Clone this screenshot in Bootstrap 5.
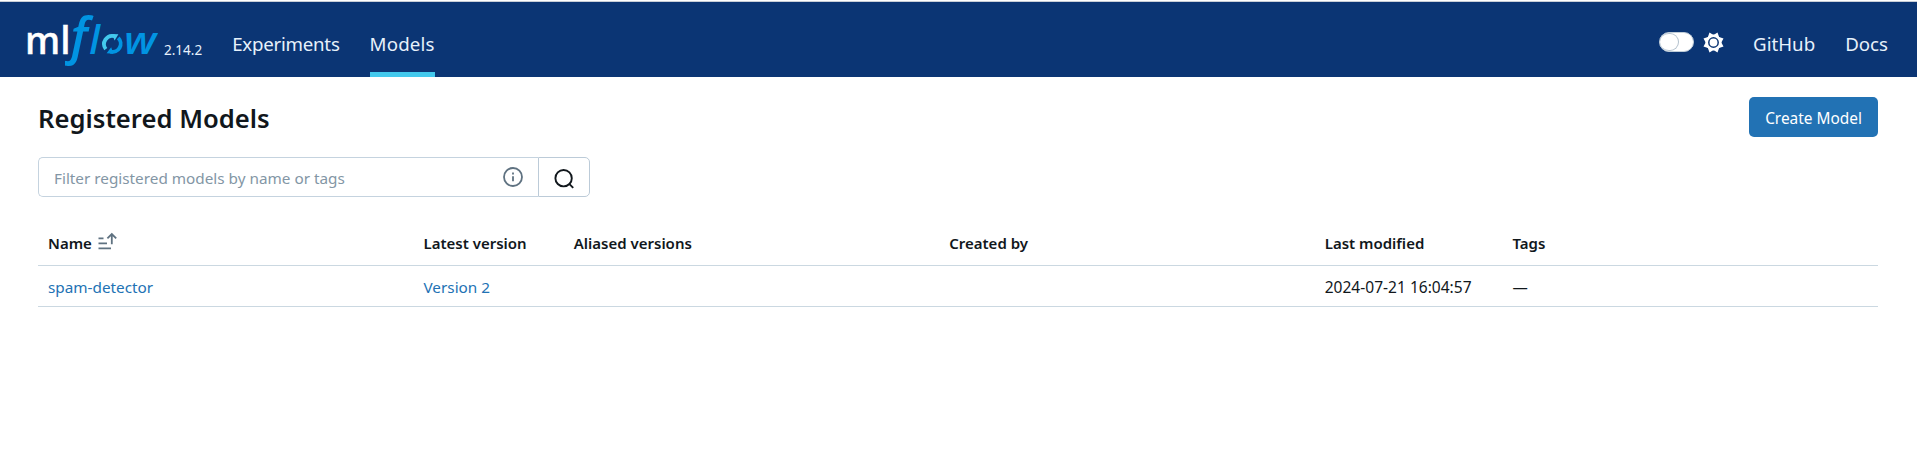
<!DOCTYPE html>
<html lang="en">
<head>
<meta charset="utf-8">
<meta name="viewport" content="width=device-width, initial-scale=1">
<title>MLflow</title>
<link href="https://cdn.jsdelivr.net/npm/bootstrap@5.3.0/dist/css/bootstrap.min.css" rel="stylesheet">
<style>
  body { font-family: "Noto Sans", "Open Sans", sans-serif; font-size: 15.3px; line-height: 20px; color: #11171c; overflow: hidden; }
  .top-edge { height: 2px; background: linear-gradient(#fff 50%, #c9ced6 50%); }
  .app-bar { height: 75px; background: #0b3574; padding: 0 28px 0 20px; font-size: 18.7px; }
  .app-bar a { color: #e7f1fb; text-decoration: none; line-height: 26px; padding-top: 29px; height: 75px; }
  .app-bar .version { font-size: 13.5px; color: #e7f1fb; padding-top: 38px; margin-left: 6px; line-height: 20px; }
  .app-bar a.is-active { border-bottom: 5px solid #43c9ed; letter-spacing: .15px; }
  .nav-exp { margin-left: 30px; margin-right: 30px; letter-spacing: -.24px; }
  .toggle-track { width: 35px; height: 20px; border-radius: 10px; background: #fff; border: 1px solid #c0cdd8; margin-top: 30px; }
  .toggle-knob { width: 19px; height: 18px; border-radius: 10px; border: 1px solid #b4c2ce; border-left: 0; }
  .gear { margin: 30px 29px 0 9px; }
  .page { padding: 20px 39px 0 38px; }
  .page h1 { font-size: 25.6px; font-weight: 600; line-height: 35px; margin: 4px 0 0; letter-spacing: .02px; }
  .btn-create { width: 129px; height: 40px; background: #2272b4; color: #fff; font-size: 15.4px; border-radius: 5px; padding: 3px 0 0; }
  .btn-create:hover { background: #0e538b; color: #fff; }
  .search { width: 552px; height: 40px; margin-top: 20px; }
  .search-box { width: 500px; border: 1px solid #c5d3df; border-right: 0; border-radius: 5px 0 0 5px; padding: 2px 15px 0; color: #8396a5; }
  .search-btn { width: 52px; border: 1px solid #bccbd8; border-radius: 0 5px 5px 0; background: #fff; padding: 0; }
  .models { margin-top: 22px; }
  .models > div { border-bottom: 1px solid #cbd8e1; }
  .head-row { height: 47px; font-weight: 600; font-size: 15px; }
  .models a { color: #2272b4; text-decoration: none; }
  .cell { width: 20.408%; padding: 0 0 0 10px; }
  .cell-sm { width: 8.163%; }
  .cell-md { width: 10.204%; }
  .head-row .cell { padding-top: 14px; }
  .body-row { height: 41px; }
  .body-row .cell { padding-top: 11px; }
  .stamp { font-size: 15.56px; }
</style>
</head>
<body>
<div class="top-edge"></div>
<header class="app-bar d-flex align-items-start">
  <svg width="138" height="75" viewBox="20 2 138 75" role="img" aria-label="mlflow">
    <g font-family="Open Sans, sans-serif" font-weight="600">
      <text x="25" y="53.5" font-size="38.5" fill="#fff" stroke="#fff" stroke-width=".3" textLength="45.5" lengthAdjust="spacingAndGlyphs">ml</text>
      <g font-style="italic" fill="#0194e2">
        <text x="70.6" y="53.5" font-size="50">f</text>
        <text x="89.2" y="53.5" font-size="39">l</text>
        <text x="124" y="53.5" font-size="37" textLength="32.3" lengthAdjust="spacingAndGlyphs">w</text>
      </g>
    </g>
    <g fill="none" stroke-width="3.8">
      <path stroke="#43c9ed" d="M105.8 49.2A8.2 8.2 0 0 1 114.3 36.2"/>
      <path stroke="#0194e2" d="M118.2 37.8A8.2 8.2 0 0 1 110.4 51.6"/>
    </g>
    <path fill="#43c9ed" d="M112 34l6.4.2-3.8 6.4z"/>
    <path fill="#0194e2" d="M113.4 53.8l-6.8-.6 4.6-6z"/>
  </svg>
  <span class="version">2.14.2</span>
  <a class="nav-exp" href="#">Experiments</a>
  <a class="is-active" href="#">Models</a>
  <div class="d-flex ms-auto align-items-start">
    <div class="toggle-track"><div class="toggle-knob"></div></div>
    <svg class="gear" width="21" height="21" viewBox="-10.5 -10.5 21 21">
      <path fill="#fff" d="M-4-10 0-7.6 4-10 5.6-5.6 10-4 7.8 0 10 4 5.6 5.6 4 10 0 7.6-4 10-5.6 5.6-10 4-7.8 0-10-4-5.6-5.6z"/>
      <circle r="7.9" fill="#fff"/>
      <circle r="4.7" stroke="#0b3574" stroke-width="1.5" fill="#fff"/>
    </svg>
    <a href="#">GitHub</a>
    <a class="ms-4" href="#" style="padding-left:6px;padding-right:1px">Docs</a>
  </div>
</header>
<main class="page">
  <div class="d-flex justify-content-between align-items-start">
    <h1>Registered Models</h1>
    <button class="btn btn-create border-0">Create Model</button>
  </div>
  <div class="search d-flex">
    <div class="search-box d-flex align-items-center justify-content-between">
      <span>Filter registered models by name or tags</span>
      <svg width="20" height="20" viewBox="0 0 20 20" fill="none" stroke="#5f7281" style="margin-top:-2px"><circle cx="10" cy="10" r="9" stroke-width="1.8"/><path d="M10 9.2v5M10 5.6v2" stroke-width="1.8"/></svg>
    </div>
    <button class="search-btn d-flex align-items-center justify-content-center"><svg width="20" height="20" viewBox="0 0 20 20" fill="none" stroke="#11171c" stroke-width="1.9" style="margin-top:3px"><circle cx="9.6" cy="9.2" r="8.2"/><path d="M15 14.6l4.2 4.2"/></svg></button>
  </div>
  <div class="models">
    <div class="head-row d-flex">
      <div class="cell d-flex align-items-start">Name
        <svg style="margin:-1px 0 0 5px" width="20" height="20" viewBox="0 0 20 20" fill="none" stroke="#5f7281" stroke-width="1.8"><path d="M1.5 6.4h5M1.5 11.3h8.5M1.5 16.3h12.5M14.8 12.2V2.4M10.4 6.4l4.4-4.4 4.4 4.4"/></svg>
      </div>
      <div class="cell cell-sm">Latest version</div>
      <div class="cell">Aliased versions</div>
      <div class="cell">Created by</div>
      <div class="cell cell-md">Last modified</div>
      <div class="cell">Tags</div>
    </div>
    <div class="body-row d-flex">
      <div class="cell"><a href="#">spam-detector</a></div>
      <div class="cell cell-sm"><a href="#">Version 2</a></div>
      <div class="cell"></div>
      <div class="cell"></div>
      <div class="cell cell-md stamp">2024-07-21 16:04:57</div>
      <div class="cell">—</div>
    </div>
  </div>
</main>
<script src="https://cdn.jsdelivr.net/npm/bootstrap@5.3.0/dist/js/bootstrap.bundle.min.js"></script>
</body>
</html>
